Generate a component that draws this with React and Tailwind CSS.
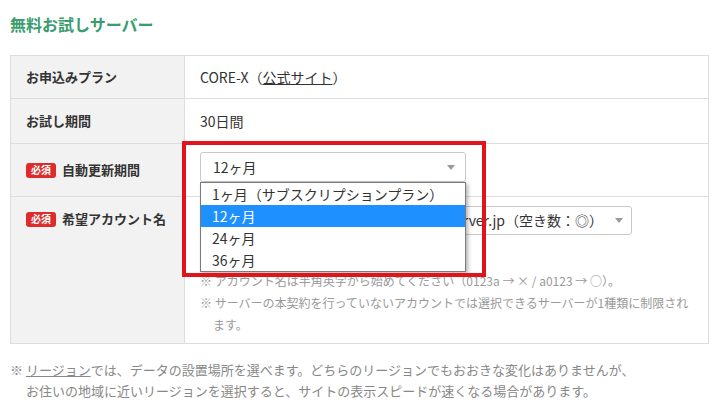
import React from 'react';

const Badge = () => (
  <span className="inline-flex items-center justify-center w-[30px] h-[15px] rounded-[3px] bg-[#dd2c2c] text-white text-[10px] font-bold leading-none mr-[6px]">
    必須
  </span>
);

const Arrow = () => (
  <svg width="8" height="5" viewBox="0 0 8 5" className="shrink-0">
    <path d="M0 0 L8 0 L4 5 Z" fill="#999" />
  </svg>
);

const OPTIONS = ['1ヶ月（サブスクリプションプラン）', '12ヶ月', '24ヶ月', '36ヶ月'];

const App = () => {
  return (
    <div className="w-[719px] h-[407px] overflow-hidden bg-white px-[10px] font-['Noto_Sans_CJK_JP','Noto_Sans',sans-serif] text-[#333]">
      <h2 className="pt-[13px] text-[16px] leading-[22px] font-bold text-[#3a9c6f]">無料お試しサーバー</h2>

      <div className="mt-[20px] border border-[#ddd]">
        {/* plan */}
        <div className="grid grid-cols-[174px_1fr] h-[43px] border-b border-[#ddd]">
          <div className="bg-[#f2f2f2] border-r border-[#ddd] pl-[15px] flex items-center text-[13px] font-bold">
            お申込みプラン
          </div>
          <div className="pl-[15px] flex items-center text-[14px]">
            CORE-X（<span className="underline">公式サイト</span>）
          </div>
        </div>

        {/* trial */}
        <div className="grid grid-cols-[174px_1fr] h-[45px] border-b border-[#ddd]">
          <div className="bg-[#f2f2f2] border-r border-[#ddd] pl-[15px] flex items-center text-[13px] font-bold">
            お試し期間
          </div>
          <div className="pl-[15px] flex items-center text-[14px]">30日間</div>
        </div>

        {/* renewal */}
        <div className="grid grid-cols-[174px_1fr] h-[53px] border-b border-[#ddd]">
          <div className="bg-[#f2f2f2] border-r border-[#ddd] pl-[15px] flex items-center text-[13px] font-bold">
            <Badge />
            自動更新期間
          </div>
          <div className="relative pl-[15px] pt-[8px]">
            <div className="w-[266px] h-[30px] border border-[#c8c8c8] rounded-[3px] pl-[12px] pr-[10px] flex items-center justify-between text-[14px]">
              <span>12ヶ月</span>
              <Arrow />
            </div>
            <div className="absolute z-10 left-[15px] top-[38px] w-[266px] bg-white border border-[#7a7a7a] shadow-[2px_2px_4px_rgba(0,0,0,0.3)] text-[14px]">
              {OPTIONS.map((o) => (
                <div
                  key={o}
                  className={`h-[22px] pl-[11px] flex items-center ${o === '12ヶ月' ? 'bg-[#1e90ff] text-white' : ''}`}
                >
                  {o}
                </div>
              ))}
            </div>
            <div className="absolute z-20 -left-[3px] -top-[3px] w-[304px] h-[136px] border-4 border-[#e1141c]" />
          </div>
        </div>

        {/* account */}
        <div className="grid grid-cols-[174px_1fr] h-[146px]">
          <div className="bg-[#f2f2f2] border-r border-[#ddd] pl-[15px] pt-[12px] flex items-start text-[13px] font-bold">
            <div className="flex items-center h-[20px]">
              <Badge />
              希望アカウント名
            </div>
          </div>
          <div className="pl-[15px] pt-[9px] pr-[15px]">
            <div className="w-[432px] h-[29px] border border-[#c8c8c8] rounded-[3px] pr-[8px] flex items-center justify-end gap-[12px] text-[14px] overflow-hidden">
              <span className="whitespace-nowrap">sv12345.xserver.jp（空き数：◎）</span>
              <Arrow />
            </div>
            <div className="mt-[35px] text-[12px] leading-[22px] text-[#999]">
              <p className="whitespace-nowrap">※ アカウント名は半角英字から始めてください（0123a → × / a0123 → ○）。</p>
              <p className="pl-[13px] -indent-[13px]">
                ※ サーバーの本契約を行っていないアカウントでは選択できるサーバーが1種類に制限され
                <br />
                ます。
              </p>
            </div>
          </div>
        </div>
      </div>

      <div className="mt-[15px] text-[13px] leading-[21px] text-[#888] pl-[16px] -indent-[16px]">
        ※ <span className="underline">リージョン</span>では、データの設置場所を選べます。どちらのリージョンでもおおきな変化はありませんが、
        <br />
        お住いの地域に近いリージョンを選択すると、サイトの表示スピードが速くなる場合があります。
      </div>
    </div>
  );
};

export default App;
